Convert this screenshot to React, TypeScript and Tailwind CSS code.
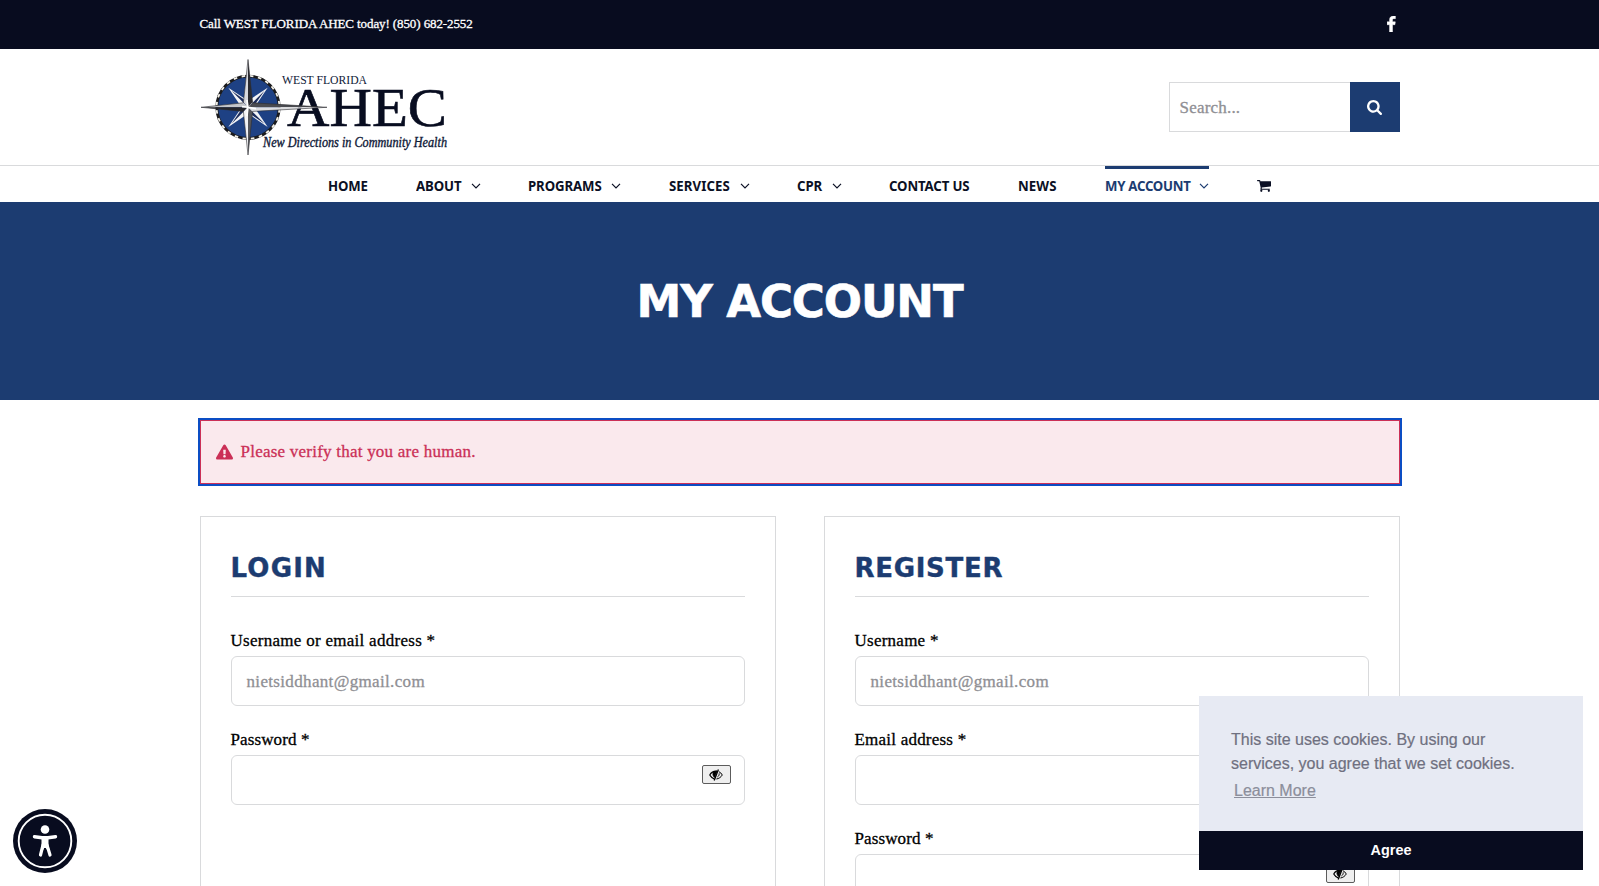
import React from "react";
import { FaExclamationTriangle } from "react-icons/fa";

const serif = "font-['Liberation_Serif',serif] whitespace-nowrap [-webkit-text-stroke:0.3px_currentColor]";

function Logo() {
  const ticks = Array.from({ length: 24 }, (_, i) => i);
  return (
    <svg width="256" height="100" viewBox="0 0 256 100" className="block overflow-visible" aria-label="West Florida AHEC">
      <circle cx="48" cy="49.3" r="31.2" fill="#1e4184" stroke="#1b1b1d" strokeWidth="2.8" />
      {ticks.map((i) => (
        <path
          key={i}
          d="M46 17.9 L49.6 17.9"
          stroke="#f4f2ea"
          strokeWidth="1.8"
          transform={`rotate(${i * 15 + 7} 48 49.3)`}
        />
      ))}
      {[45, 135, 225, 315].map((a) => (
        <g key={a} transform={`rotate(${a} 48 49.3)`}>
          <path d="M48 21.5 L44 42 L48 49.3 L52 42 Z" fill="#f3f4f7" />
          <path d="M48 26 L48 47 L50.8 41.5 Z" fill="#1b2c5c" />
        </g>
      ))}
      <text x="82" y="26" textLength="85" lengthAdjust="spacingAndGlyphs" fontSize="12.5" fill="#101a38" fontFamily="Liberation Serif, serif">WEST FLORIDA</text>
      <text x="87" y="68" textLength="160" lengthAdjust="spacingAndGlyphs" fontSize="55.5" fill="#080d20" stroke="#080d20" strokeWidth="0.6" fontFamily="Liberation Serif, serif">AHEC</text>
      <text x="63" y="89" textLength="184" lengthAdjust="spacingAndGlyphs" fontSize="14.5" fontStyle="italic" fill="#101a38" stroke="#101a38" strokeWidth="0.4" fontFamily="Liberation Serif, serif">New Directions in Community Health</text>
      <path d="M1 49.3 L43 44.8 L48 49.3 Z" fill="#c4c6ca" />
      <path d="M1 49.3 L43 53.4 L48 49.3 Z" fill="#26262b" />
      <path d="M127 49.3 L53 44.8 L48 49.3 Z" fill="#4a4b50" />
      <path d="M127 49.3 L53 53.4 L48 49.3 Z" fill="#dcdde0" />
      <path d="M48 1.5 L43.4 44 L48 49.3 Z" fill="#d9dade" />
      <path d="M48 1.5 L52.6 44 L48 49.3 Z" fill="#2b2b30" />
      <path d="M48 97 L43.4 54 L48 49.3 Z" fill="#f3f3f5" />
      <path d="M48 97 L52.6 54 L48 49.3 Z" fill="#55565b" />
      <path d="M48 1.5 L43.4 44.8 L1 49.3 L43.4 53.4 L48 97 L52.6 53.4 L127 49.3 L52.6 44.8 Z" fill="none" stroke="#2b2b30" strokeWidth="0.6" />
      <path d="M42 48.6 L48 49.3 L56 50.6 M47 42 L48 49.3 L47 58" stroke="#ffffff" strokeWidth="1.6" fill="none" />
    </svg>
  );
}

function FacebookIcon() {
  return (
    <svg viewBox="479 0 864 1664" className="mr-[4px] h-[16px] w-[8.5px]" fill="currentColor" stroke="currentColor" strokeWidth="50">
      <path d="M1343 12v264h-157q-86 0-116 36t-30 108v189h293l-39 296h-254v759h-306v-759h-255v-296h255v-218q0-186 104-288.5t277-102.5q147 0 228 12z" />
    </svg>
  );
}

function SearchIcon() {
  return (
    <svg viewBox="64 128 1664 1664" className="h-[15px] w-[15px]" fill="currentColor">
      <path d="M1216 832q0-185-131.5-316.5t-316.5-131.5-316.5 131.5-131.5 316.5 131.5 316.5 316.5 131.5 316.5-131.5 131.5-316.5zm512 832q0 52-38 90t-90 38q-54 0-90-38l-343-342q-179 124-399 124-143 0-273.5-55.5t-225-150-150-225-55.5-273.5 55.5-273.5 150-225 225-150 273.5-55.5 273.5 55.5 225 150 150 225 55.5 273.5q0 220-124 399l343 343q37 37 37 90z" />
    </svg>
  );
}

function CartIcon() {
  return (
    <svg viewBox="64 256 1664 1408" className="h-[12px] w-[14px]" fill="currentColor">
      <path d="M704 1536q0 52-38 90t-90 38-90-38-38-90 38-90 90-38 90 38 38 90zm896 0q0 52-38 90t-90 38-90-38-38-90 38-90 90-38 90 38 38 90zm128-1088v512q0 24-16.5 42.5t-40.5 21.5l-1044 122q13 60 13 70 0 16-24 64h920q26 0 45 19t19 45-19 45-45 19h-1024q-26 0-45-19t-19-45q0-11 8-31.5t16-36 21.5-40 15.5-29.5l-177-823h-204q-26 0-45-19t-19-45 19-45 45-19h256q16 0 28.5 6.5t19.5 15.5 13 24.5 8 26 5.5 29.5 4.5 26h1201q26 0 45 19t19 45z" />
    </svg>
  );
}

function Chevron() {
  return (
    <svg width="10" height="6" viewBox="0 0 10 6" fill="none" stroke="currentColor" strokeWidth="1.2" className="mt-[2px] shrink-0">
      <path d="M1 0.8 L5 4.8 L9 0.8" />
    </svg>
  );
}

const nav = [
  { label: "HOME", w: "w-[40px]", t: "tracking-[-0.15px]" },
  { label: "ABOUT", w: "w-[65px]", t: "tracking-[-0.1px]", menu: true },
  { label: "PROGRAMS", w: "w-[93px]", t: "tracking-[-0.1px]", menu: true },
  { label: "SERVICES", w: "w-[80.5px]", t: "tracking-[0.1px]", menu: true },
  { label: "CPR", w: "w-[44.5px]", t: "tracking-[-0.1px]", menu: true },
  { label: "CONTACT US", w: "w-[81px]", t: "tracking-[-0.15px]" },
  { label: "NEWS", w: "w-[39px]", t: "tracking-[0.1px]" },
  { label: "MY ACCOUNT", w: "w-[104.5px]", t: "tracking-[-0.3px]", menu: true, active: true },
];

function EyeButton() {
  return (
    <button className="mt-[9px] mr-[13px] flex h-[19px] w-[29px] items-center justify-center rounded-[2px] border border-[#5c5c5c] bg-[#efefef] text-black">
      <svg width="14" height="12" viewBox="0 0 14 12" fill="none" stroke="currentColor">
        <path d="M0.7 6 C2.4 3.2 5 1.9 8 2.2 M0.7 6 C1.9 8 3.4 9.2 5.2 9.8" strokeWidth="1.3" />
        <path d="M4.6 2.6 C3.4 4.8 3.8 7.2 5.6 8.4 L8 2.2 Z" fill="currentColor" strokeWidth="0.8" />
        <path d="M9.4 0.6 L5.2 11.4" strokeWidth="1.3" />
        <path d="M9.8 2.6 C11.4 3.3 12.6 4.6 13.3 6 C12 8.2 9.8 9.7 7.4 10 M10.2 4.4 C10.3 6 9.7 7.2 8.5 7.9" strokeWidth="1" />
      </svg>
    </button>
  );
}

function Field({ label, t, value, eye }: { label: string; t: string; value?: string; eye?: boolean }) {
  return (
    <div className="mb-[21px]">
      <div className={`${serif} ${t} h-[28px] text-[17px] leading-[26px] text-black`}>{label}</div>
      <div className="flex h-[50px] items-start justify-between rounded-[6px] border border-[#d9dadc] bg-white">
        <span className={`${serif} pl-[15px] text-[17px] leading-[49px] tracking-[0.34px] text-[#8f8f94]`}>{value}</span>
        {eye && <EyeButton />}
      </div>
    </div>
  );
}

function Card({ title, t, children }: { title: string; t: string; children: React.ReactNode }) {
  return (
    <section className="h-[520px] w-[576px] border border-[#d9dadc] px-[30px]">
      <h2 className={`${t} mb-[31px] h-[80px] border-b border-[#d9dadc] pt-[33px] font-['DejaVu_Sans',sans-serif] text-[26px] leading-[36px] font-bold whitespace-nowrap text-[#1c3c71] [-webkit-text-stroke:0.4px_currentColor]`}>
        {title}
      </h2>
      {children}
    </section>
  );
}

export default function App() {
  return (
    <div className="relative h-[886px] w-[1599px] overflow-hidden bg-white">
      <div className="h-[49px] bg-[#080c1f]">
        <div className="mx-auto flex h-[48px] w-[1200px] items-center justify-between text-white">
          <span className={`${serif} text-[13px] tracking-[-0.1px]`}>Call WEST FLORIDA AHEC today! (850) 682-2552</span>
          <FacebookIcon />
        </div>
      </div>
      <header className="h-[117px] border-b border-[#d9dadc]">
        <div className="mx-auto flex w-[1200px] items-start justify-between">
          <div className="pt-[9px]"><Logo /></div>
          <div className="mt-[33px] flex h-[50px] w-[231px]">
            <div className="flex flex-1 items-center border border-r-0 border-[#d9dadc] pt-[2px] pl-[10px]">
              <span className={`${serif} text-[17px] tracking-[0.2px] text-[#8f8f94]`}>Search...</span>
            </div>
            <div className="flex w-[50px] items-center justify-center bg-[#1c3c71] text-white">
              <SearchIcon />
            </div>
          </div>
        </div>
      </header>
      <nav className="flex h-[36px] justify-between pr-[328px] pl-[328px]">
        {nav.map((n) => (
          <div
            key={n.label}
            className={`${n.w} flex items-center border-t-[3px] pb-[1px] ${n.active ? "border-[#1c3c71] text-[#1c3c71]" : "border-transparent text-[#0b1024]"}`}
          >
            <span className={`${n.t} w-0 grow origin-left scale-x-[0.88] font-['Noto_Sans',sans-serif] text-[15px] font-bold whitespace-nowrap`}>{n.label}</span>
            {n.menu && <Chevron />}
          </div>
        ))}
        <div className="flex items-center pt-[4px] text-[#0b1024]">
          <CartIcon />
        </div>
      </nav>
      <div className="flex h-[198px] items-center justify-center bg-[#1c3c71]">
        <h1 className="font-['DejaVu_Sans',sans-serif] text-[45px] leading-none font-bold tracking-[-1.1px] whitespace-nowrap text-white [-webkit-text-stroke:0.6px_currentColor]">MY ACCOUNT</h1>
      </div>
      <main className="mx-auto w-[1200px] pt-[20px]">
        <div className="flex h-[64px] items-center border border-[#cb3057] bg-[#fae9ed] pl-[15px] text-[#cb3057] outline-2 outline-[#0c4dc4]">
          <FaExclamationTriangle className="mr-[8px] h-[16px] w-[17px]" />
          <span className={`${serif} text-[17px] tracking-[0.23px]`}>Please verify that you are human.</span>
        </div>
        <div className="mt-[32px] flex justify-between">
          <Card title="LOGIN" t="tracking-[1.2px]">
            <Field label="Username or email address *" t="tracking-[0.28px]" value="nietsiddhant@gmail.com" />
            <Field label="Password *" t="tracking-[0.12px]" eye />
          </Card>
          <Card title="REGISTER" t="tracking-[0.7px]">
            <Field label="Username *" t="tracking-[0.25px]" value="nietsiddhant@gmail.com" />
            <Field label="Email address *" t="tracking-[0.22px]" />
            <Field label="Password *" t="tracking-[0.12px]" eye />
          </Card>
        </div>
      </main>
      <div className="absolute top-[696px] left-[1199px] flex h-[174px] w-[384px] flex-col bg-[#e7eaf3] font-['Liberation_Sans',sans-serif]">
        <div className="h-[135px] pt-[32px] pl-[32px] text-[16px] leading-[24px] whitespace-nowrap text-[#6f7080] [-webkit-text-stroke:0.2px_currentColor]">
          <div>This site uses cookies. By using our</div>
          <div>services, you agree that we set cookies.</div>
          <div className="pt-[3px] pl-[3px] text-[#8c8e9b] underline">Learn More</div>
        </div>
        <div className="flex h-[39px] items-center justify-center bg-[#080c1f] text-[14.4px] font-bold text-white">Agree</div>
      </div>
      <svg className="absolute top-[809px] left-[13px]" width="64" height="64" viewBox="0 0 64 64">
        <circle cx="32" cy="32" r="32" fill="#080c1f" />
        <circle cx="32" cy="32" r="26.3" fill="none" stroke="#fff" strokeWidth="1.9" />
        <circle cx="32" cy="20.5" r="4.3" fill="#fff" />
        <path d="M21.5 27.8 L29 28.8 L35 28.8 L42.5 27.8" fill="none" stroke="#fff" strokeWidth="3.4" strokeLinecap="round" />
        <path d="M28.5 28 H35.5 V37 L38 46.5 L32.8 39 H31.2 L27 46.5 L28.5 37 Z" fill="#fff" />
        <path d="M30 36 L27.5 46 M34 36 L37 46" stroke="#fff" strokeWidth="3.2" strokeLinecap="round" />
      </svg>
    </div>
  );
}
